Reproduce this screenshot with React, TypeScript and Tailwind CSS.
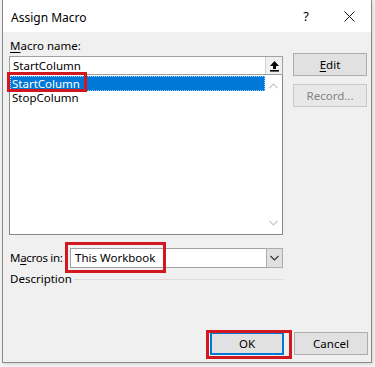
import React from "react";

const font = { fontFamily: '"Segoe UI", "Noto Sans", "Open Sans", sans-serif' };

function UpArrow() {
  return (
    <svg width="11" height="12" viewBox="0 0 11 12">
      <path d="M5.5 1 L1 6 H4 V9 H7 V6 H10 Z" fill="#000" />
      <rect x="1" y="10" width="9" height="1.6" fill="#000" />
    </svg>
  );
}

function Chevron({ color, up }: { color: string; up?: boolean }) {
  return (
    <svg width="9" height="6" viewBox="0 0 9 6">
      <path d={up ? "M0.5 5 L4.5 1 L8.5 5" : "M0.5 1 L4.5 5 L8.5 1"} stroke={color} strokeWidth="1.2" fill="none" />
    </svg>
  );
}

export default function App() {
  return (
    <div className="w-[375px] h-[367px] bg-[#f4f4f4] pl-[2px] overflow-hidden" style={font}>
      <div className="w-[370px] h-[363px] border-x border-b border-[#8a8a8a] bg-[#f0f0f0] flex flex-col shadow-[1px_1px_3px_rgba(0,0,0,0.15)]">
        {/* Title bar */}
        <div className="h-[32px] bg-white flex items-center pl-[8px] pr-[14px] text-[12px] text-black">
          <span className="flex-1 mt-[3px]">Assign Macro</span>
          <span className="mr-[35px] text-[13px] mt-[1px]">?</span>
          <svg width="11" height="11" viewBox="0 0 11 11" className="mr-[2px]">
            <path d="M0.5 0.5 L10.5 10.5 M10.5 0.5 L0.5 10.5" stroke="#111" strokeWidth="1" />
          </svg>
        </div>

        {/* Body */}
        <div className="flex-1 flex flex-col pl-[6px] text-[11.5px] text-black whitespace-nowrap">
          <div className="flex">
            {/* Left column */}
            <div className="w-[274px] flex flex-col">
              <div className="h-[15px] leading-[15px] mt-[6px] pl-[1px]">
                <span className="underline underline-offset-2">M</span>acro name:
              </div>
              <div className="mt-[3px] h-[19px] border border-[#a0a0a0] bg-white flex items-center">
                <span className="flex-1 pl-[3px] leading-[15px]">StartColumn</span>
                <div className="w-[17px] h-[17px] bg-[#f0f0f0] border-l border-[#d0d0d0] flex items-center justify-center">
                  <UpArrow />
                </div>
              </div>
              <div className="h-[160px] border-x border-b border-[#828790] bg-white flex">
                <div className="flex-1 flex flex-col pt-[1px] relative">
                  <div className="h-[15px] leading-[13px] bg-[#0078d7] text-white pl-[1px] border border-dotted border-[#9fd0ff]">
                    StartColumn
                  </div>
                  <div className="h-[13px] leading-[13px] pl-[2px]">StopColumn</div>
                  <div className="absolute left-[-3px] top-[-3px] w-[80px] h-[20px] border-[3px] border-[#d11820]" />
                </div>
                <div className="w-[17px] flex flex-col items-center justify-between py-[8px] bg-white">
                  <Chevron color="#c8c8c8" up />
                  <Chevron color="#c8c8c8" />
                </div>
              </div>
            </div>

            {/* Right column */}
            <div className="ml-[10px] mt-[21px] flex flex-col gap-[8px]">
              <div className="w-[74px] h-[23px] bg-[#e1e1e1] border border-[#adadad] flex items-center justify-center">
                <span>
                  <span className="underline underline-offset-2">E</span>dit
                </span>
              </div>
              <div className="w-[74px] h-[23px] bg-[#e8e8e8] border border-[#c8c8c8] flex items-center justify-center text-[#838383]">
                Record...
              </div>
            </div>
          </div>

          {/* Macros in */}
          <div className="mt-[13px] flex items-center w-[274px]">
            <span className="w-[61px] pl-[1px] tracking-[-0.3px]">
              M<span className="underline underline-offset-2">a</span>cros in:
            </span>
            <div className="relative flex-1 h-[20px] border border-[#a0a0a0] bg-white flex items-center">
              <span className="flex-1 pl-[4px]">This Workbook</span>
              <div className="w-[17px] h-[20px] -my-[1px] -mr-[1px] bg-[#e0e0e0] border border-[#adadad] flex items-center justify-center">
                <Chevron color="#333" />
              </div>
              <div className="absolute left-[-6px] top-[-7px] w-[101px] h-[31px] border-[3px] border-[#d11820]" />
            </div>
          </div>

          {/* Description */}
          <div className="mt-[1px] flex items-center w-[274px] h-[20px]">
            <span className="pl-[1px]">Description</span>
            <div className="flex-1 ml-[2px] h-px bg-[#dcdcdc]" />
          </div>

          {/* Buttons */}
          <div className="mt-auto mb-[7px] flex justify-end pr-[3px] gap-[10px]">
            <div className="relative w-[74px] h-[23px] bg-[#e1e1e1] border-2 border-[#0078d7] flex items-center justify-center">
              OK
              <div className="absolute left-[-6px] top-[-4px] w-[86px] h-[29px] border-[3px] border-[#d11820]" />
            </div>
            <div className="w-[74px] h-[23px] bg-[#e1e1e1] border border-[#adadad] flex items-center justify-center">
              Cancel
            </div>
          </div>
        </div>
      </div>
    </div>
  );
}
